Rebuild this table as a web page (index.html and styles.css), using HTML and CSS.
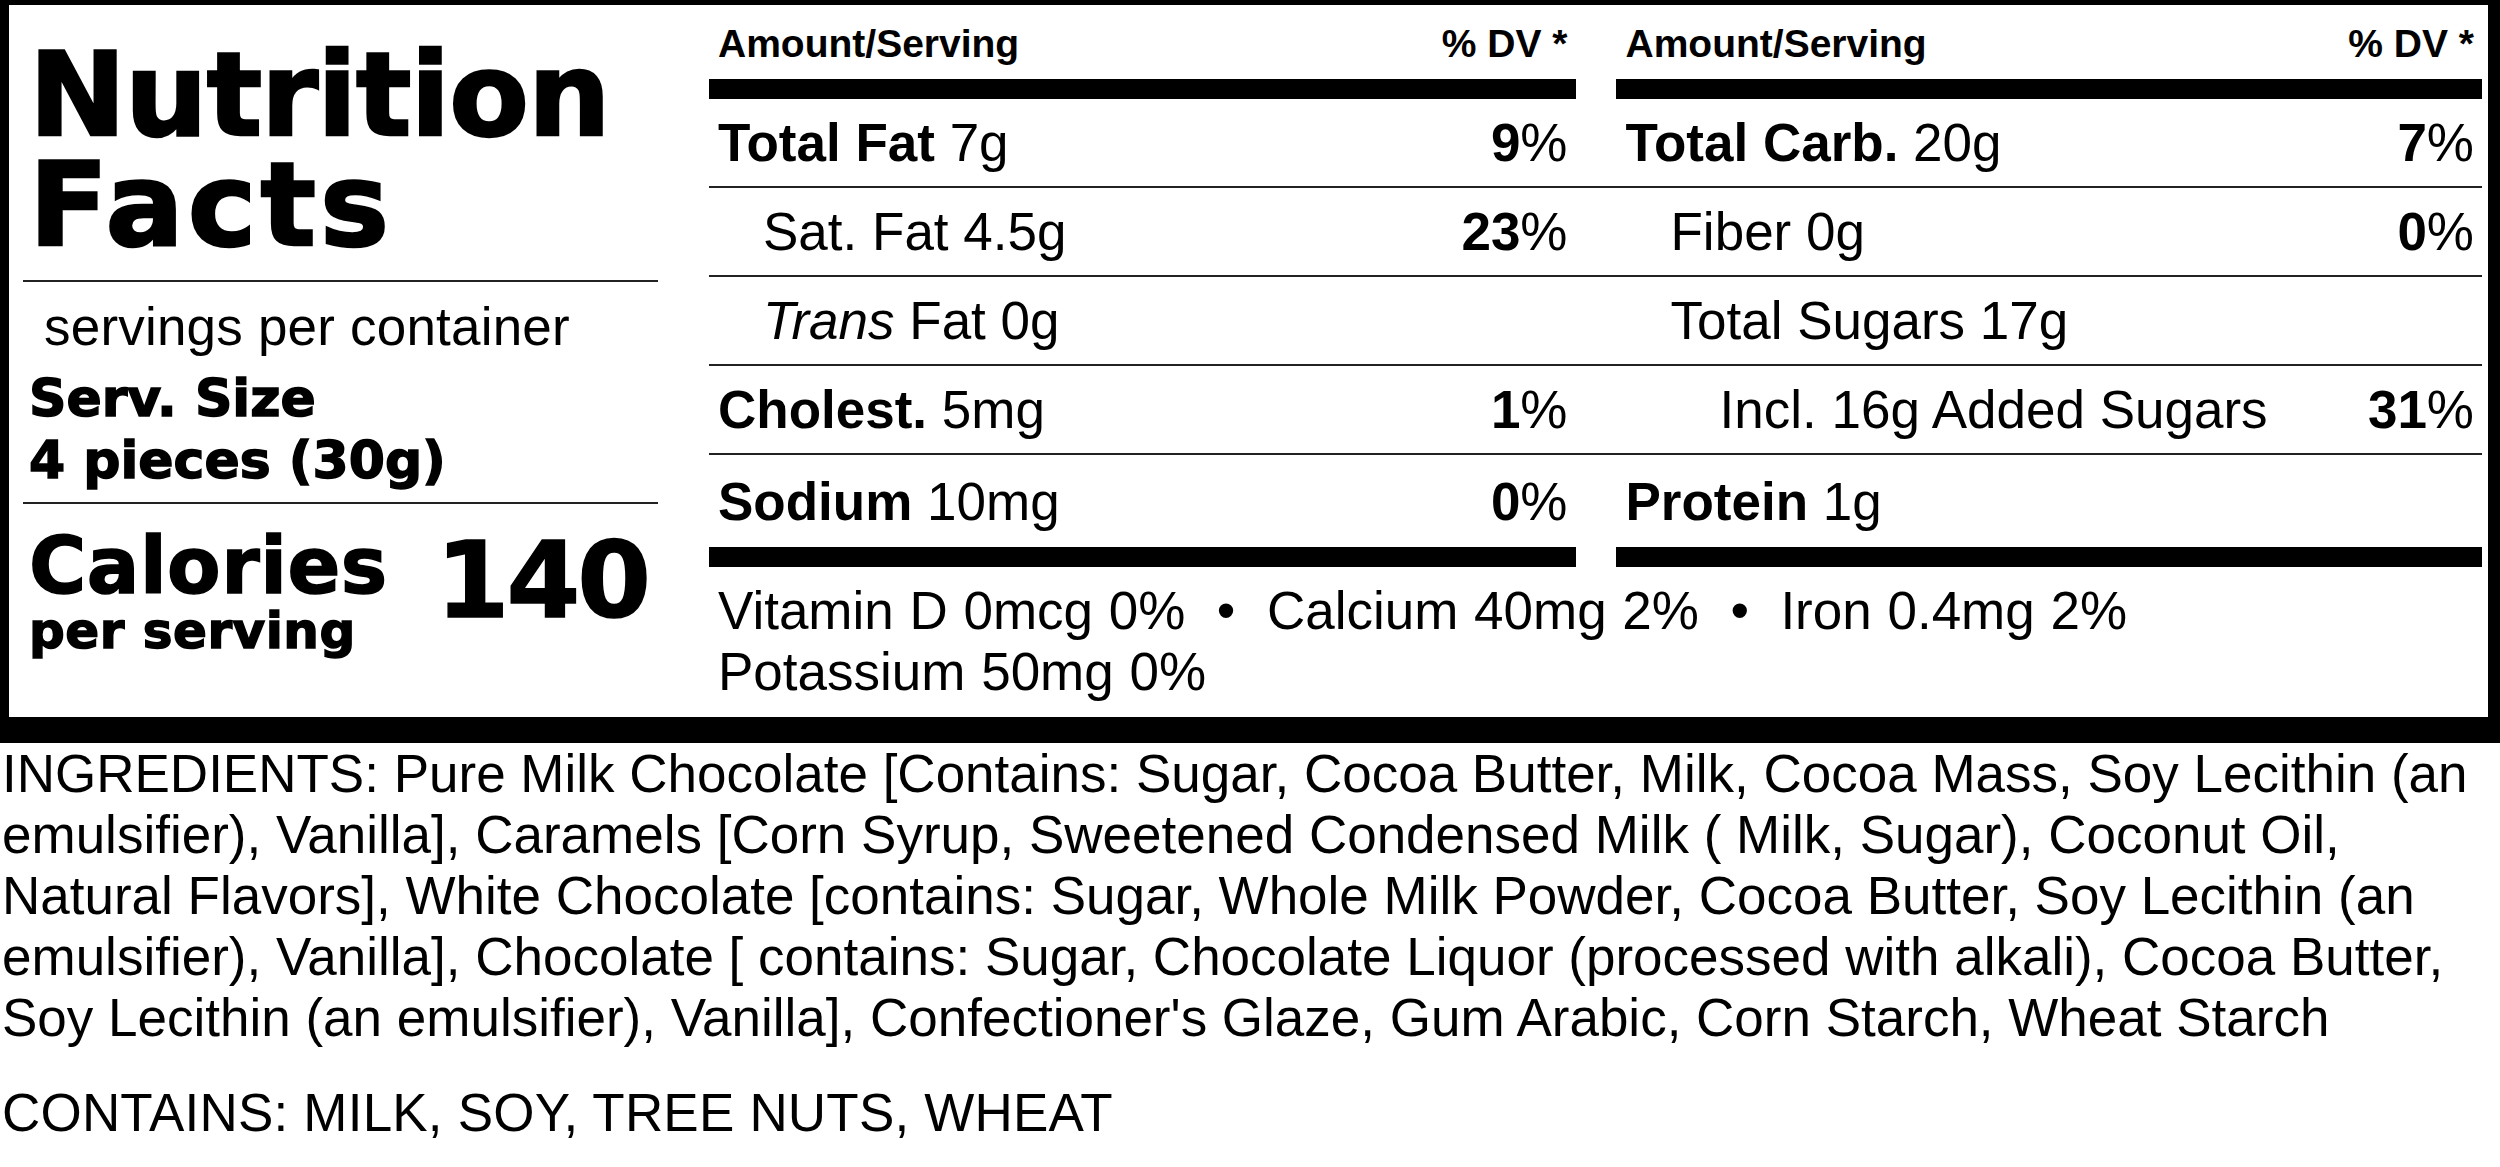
FILE: index.html
```html
<!DOCTYPE html>
<html lang="en">
<head>
<meta charset="utf-8">
<title>Nutrition Facts</title>
<link rel="stylesheet" href="styles.css">
</head>
<body>
<div class="label">
  <div class="panel">
    <div class="left">
      <div class="title">
        <div class="title-line">Nutrition</div>
        <div class="title-line wide">Facts</div>
      </div>
      <div class="servings">
        <div class="per-container">servings per container</div>
        <div class="serv-size">Serv. Size<br>4 pieces (30g)</div>
      </div>
      <div class="calories">
        <div class="cal-label">
          <div class="cal-word">Calories</div>
          <div class="per-serving">per serving</div>
        </div>
        <div class="cal-value">140</div>
      </div>
    </div>
    <div class="facts">
      <div class="row head">
        <div class="cell"><span>Amount/Serving</span><span>% DV *</span></div>
        <div class="cell"><span>Amount/Serving</span><span>% DV *</span></div>
      </div>
      <div class="bars"><div></div><div></div></div>
      <div class="row item">
        <div class="cell"><span><b>Total Fat</b> 7g</span><span><b>9</b>%</span></div>
        <div class="cell"><span><b>Total Carb.</b> 20g</span><span><b>7</b>%</span></div>
      </div>
      <div class="row item">
        <div class="cell"><span class="sub">Sat. Fat 4.5g</span><span><b>23</b>%</span></div>
        <div class="cell"><span class="sub">Fiber 0g</span><span><b>0</b>%</span></div>
      </div>
      <div class="row item">
        <div class="cell"><span class="sub"><i>Trans</i> Fat 0g</span></div>
        <div class="cell"><span class="sub">Total Sugars 17g</span></div>
      </div>
      <div class="row item">
        <div class="cell"><span><b>Cholest.</b> 5mg</span><span><b>1</b>%</span></div>
        <div class="cell"><span class="sub2">Incl. 16g Added Sugars</span><span><b>31</b>%</span></div>
      </div>
      <div class="row item last">
        <div class="cell"><span><b>Sodium</b> 10mg</span><span><b>0</b>%</span></div>
        <div class="cell"><span><b>Protein</b> 1g</span></div>
      </div>
      <div class="bars"><div></div><div></div></div>
      <div class="vitamins">Vitamin D 0mcg 0% &nbsp;•&nbsp; Calcium 40mg 2% &nbsp;•&nbsp; Iron 0.4mg 2%<br>Potassium 50mg 0%</div>
    </div>
  </div>
  <div class="ingredients">
    <p>INGREDIENTS: Pure Milk Chocolate [Contains: Sugar, Cocoa Butter, Milk, Cocoa Mass, Soy Lecithin (an<br>emulsifier), Vanilla], Caramels [Corn Syrup, Sweetened Condensed Milk ( Milk, Sugar), Coconut Oil,<br>Natural Flavors], White Chocolate [contains: Sugar, Whole Milk Powder, Cocoa Butter, Soy Lecithin (an<br>emulsifier), Vanilla], Chocolate [ contains: Sugar, Chocolate Liquor (processed with alkali), Cocoa Butter,<br>Soy Lecithin (an emulsifier), Vanilla], Confectioner's Glaze, Gum Arabic, Corn Starch, Wheat Starch</p>
    <p class="contains">CONTAINS: MILK, SOY, TREE NUTS, WHEAT</p>
  </div>
</div>
</body>
</html>
```

FILE: styles.css
```css
html, body {
  margin: 0;
  padding: 0;
  background: #fff;
}

body {
  font-family: "Liberation Sans", Arial, sans-serif;
  color: #000;
}

.panel {
  display: flex;
  gap: 51px;
  height: 712px;
  padding: 0 6px 0 14px;
  border-style: solid;
  border-color: #000;
  border-width: 5px 12px 26px 9px;
}

.left {
  width: 635px;
  flex: none;
  display: flex;
  flex-direction: column;
}

.title,
.serv-size,
.cal-word,
.per-serving,
.cal-value {
  font-family: "DejaVu Sans", "Liberation Sans", sans-serif;
  font-weight: 700;
  -webkit-text-stroke: 1.5px #000;
}

.title {
  font-size: 116px;
  line-height: 110px;
  padding: 35px 0 20px 6px;
  border-bottom: 2px solid #222;
  -webkit-text-stroke: 2.5px #000;
}

.title-line {
  height: 110px;
  letter-spacing: -1px;
}

.title-line.wide {
  letter-spacing: 4px;
}

.servings {
  padding: 14px 0 11px 6px;
  border-bottom: 2px solid #222;
}

.per-container {
  font-size: 53px;
  line-height: 61px;
  padding-left: 15px;
  letter-spacing: 0.2px;
}

.serv-size {
  margin-top: 10px;
  font-size: 52px;
  line-height: 62px;
}

.calories {
  display: flex;
  justify-content: space-between;
  align-items: flex-start;
  padding: 22px 10px 0 6px;
}

.cal-word {
  font-size: 78px;
  line-height: 80px;
  letter-spacing: 0.5px;
}

.per-serving {
  font-size: 50px;
  line-height: 50px;
  letter-spacing: 0.5px;
}

.cal-value {
  font-size: 106px;
  line-height: 106px;
  letter-spacing: -3px;
  margin-top: 2px;
}

.facts {
  width: 1773px;
  flex: none;
  display: flex;
  flex-direction: column;
}

.row,
.bars {
  display: grid;
  grid-template-columns: 1fr 1fr;
  column-gap: 40px;
}

.bars {
  height: 20px;
}

.bars div {
  background: #000;
}

.cell {
  display: flex;
  justify-content: space-between;
  align-items: center;
  padding: 0 8px 0 9px;
  font-size: 53px;
}

.cell + .cell {
  padding-left: 10px;
}

.head {
  height: 74px;
}

.head .cell {
  align-items: flex-start;
  padding-top: 16px;
  font-size: 39px;
  line-height: 45px;
  font-weight: 700;
}

.item {
  height: 87px;
  border-bottom: 2px solid #222;
}

.item.last {
  height: 92px;
  border-bottom: none;
}

.sub {
  padding-left: 45px;
}

.sub2 {
  padding-left: 94px;
}

.vitamins {
  padding: 13px 0 0 9px;
  font-size: 53px;
  line-height: 61px;
  word-spacing: 1px;
}

.ingredients {
  padding: 0 2px;
  font-size: 53px;
  line-height: 61px;
}

.ingredients p {
  margin: 0;
}

.ingredients .contains {
  margin-top: 34px;
  letter-spacing: 0.2px;
}
```
